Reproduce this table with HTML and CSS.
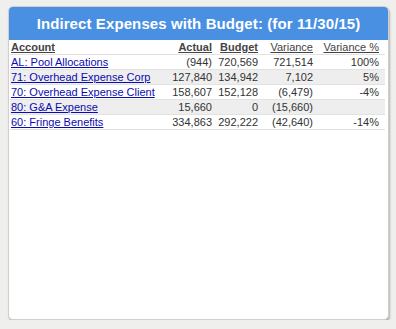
FILE: index.html
```html
<!DOCTYPE html>
<html>
<head>
<meta charset="utf-8">
<link rel="stylesheet" href="styles.css">
</head>
<body>
<div class="card">
  <div class="title">Indirect Expenses with Budget: (for 11/30/15)</div>
  <table class="grid">
    <colgroup>
      <col class="c-acct"><col class="c-act"><col class="c-bud"><col class="c-var"><col class="c-pct">
    </colgroup>
    <thead>
      <tr>
        <th class="l">Account</th>
        <th>Actual</th>
        <th>Budget</th>
        <th class="plain">Variance</th>
        <th class="plain last">Variance %</th>
      </tr>
    </thead>
    <tbody>
      <tr><td class="l"><a href="#">AL: Pool Allocations</a></td><td>(944)</td><td>720,569</td><td>721,514</td><td class="last">100%</td></tr>
      <tr class="alt"><td class="l"><a href="#">71: Overhead Expense Corp</a></td><td>127,840</td><td>134,942</td><td>7,102</td><td class="last">5%</td></tr>
      <tr><td class="l"><a href="#">70: Overhead Expense Client</a></td><td>158,607</td><td>152,128</td><td>(6,479)</td><td class="last">-4%</td></tr>
      <tr class="alt"><td class="l"><a href="#">80: G&amp;A Expense</a></td><td>15,660</td><td>0</td><td>(15,660)</td><td class="last"></td></tr>
      <tr><td class="l"><a href="#">60: Fringe Benefits</a></td><td>334,863</td><td>292,222</td><td>(42,640)</td><td class="last">-14%</td></tr>
    </tbody>
  </table>
</div>
</body>
</html>
```
FILE: styles.css
```css
html, body {
  margin: 0;
  padding: 0;
  background: #efefed;
}
body {
  padding: 6px 6px 0 8px;
  font-family: Arial, "Liberation Sans", sans-serif;
}
.card {
  width: 381px;
  height: 314px;
  box-sizing: border-box;
  background: #fff;
  border: 1px solid #cfcfcf;
  border-radius: 5px;
  box-shadow: 1px 2px 2px rgba(0,0,0,0.25);
  overflow: hidden;
}
.title {
  background: #4a90e2;
  color: #fff;
  font-weight: bold;
  font-size: 15px;
  letter-spacing: 0.1px;
  height: 33px;
  line-height: 33px;
  text-align: center;
}
.grid {
  width: 375px;
  margin-left: 1px;
  border-collapse: collapse;
  table-layout: fixed;
  font-size: 11px;
  color: #333;
}
.c-acct { width: 160px; }
.c-act { width: 44px; }
.c-bud { width: 46px; }
.c-var { width: 55px; }
.c-pct { width: 70px; }
.grid th, .grid td {
  height: 14px;
  padding: 0 2px 0 1px;
  text-align: right;
  white-space: nowrap;
  border-bottom: 1px solid #e2e2e2;
  line-height: 14px;
}
.grid .last {
  padding-right: 6px;
}
.grid th {
  font-weight: bold;
  text-decoration: underline;
  color: #444;
}
.grid th.plain {
  font-weight: normal;
}
.grid .l {
  text-align: left;
}
.grid tr.alt td {
  background: #eeeeee;
}
.grid a {
  color: #0b0bb0;
}
```
